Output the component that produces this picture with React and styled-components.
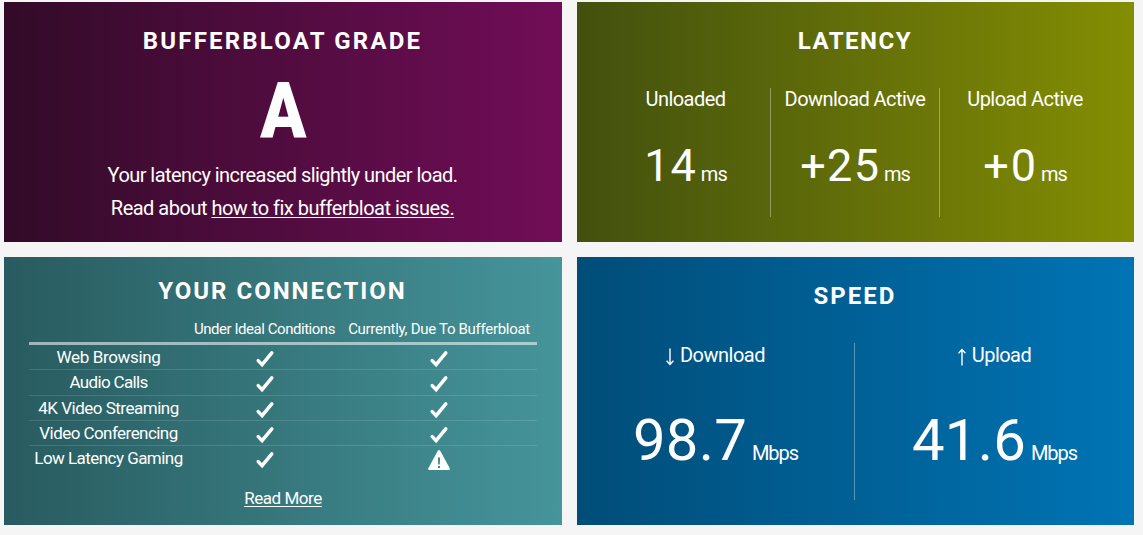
import React from "react";
import styled, { createGlobalStyle } from "styled-components";

const GlobalStyle = createGlobalStyle`
  * {
    box-sizing: border-box;
  }
  body {
    margin: 0;
    background: #f5f5f5;
    font-family: Roboto, "Liberation Sans", sans-serif;
    color: #ffffff;
  }
`;

const ResultsGrid = styled.main`
  display: grid;
  grid-template-columns: 558px 557px;
  grid-template-rows: 240px 268px;
  gap: 15px;
  padding: 2px 9px 10px 4px;
`;

const Card = styled.section`
  display: flex;
  flex-direction: column;
  align-items: center;
  padding-top: ${(props) => props.$top || 21}px;
  background: linear-gradient(to right, ${(props) => props.$from}, ${(props) => props.$to});
`;

const CardTitle = styled.h2`
  margin: 0 1px 0 0;
  font-weight: 700;
  font-size: 24px;
  line-height: 36px;
  letter-spacing: ${(props) => props.$track || 2}px;
  white-space: nowrap;
  text-transform: uppercase;
`;

const Grade = styled.div`
  margin: 12px 0 8px;
  font-weight: 900;
  font-size: 77px;
  line-height: 80px;
  transform: scaleX(0.88);
`;

const GradeText = styled.p`
  margin: 0 1px 0 0;
  font-size: 20px;
  line-height: 33px;
  letter-spacing: ${(props) => props.$track || -0.5}px;
  white-space: nowrap;
`;

const TextLink = styled.a`
  color: inherit;
  text-decoration: underline;
  text-decoration-thickness: 1px;
  text-underline-offset: 2px;
  text-decoration-skip-ink: none;
`;

const Columns = styled.div`
  display: grid;
  grid-template-columns: ${(props) => props.$columns};
  height: ${(props) => props.$height}px;
  margin-top: 29px;
`;

const Column = styled.div`
  display: flex;
  flex-direction: column;
  align-items: center;
  padding-top: ${(props) => props.$top || 0}px;

  & + & {
    border-left: 1px solid rgba(255, 255, 255, 0.35);
  }
`;

const Label = styled.div`
  display: flex;
  align-items: center;
  gap: 6px;
  font-size: 20px;
  line-height: 22px;
  letter-spacing: ${(props) => props.$track || -0.55}px;
  white-space: nowrap;
`;

const Reading = styled.div`
  display: flex;
  align-items: baseline;
  gap: 5px;
  margin-top: ${(props) => (props.$large ? 39 : 28)}px;
  line-height: ${(props) => (props.$large ? 70 : 56)}px;
`;

const Value = styled.span`
  margin-right: -${(props) => props.$track}px;
  font-size: ${(props) => (props.$large ? 58 : 45)}px;
  letter-spacing: ${(props) => props.$track}px;
`;

const Unit = styled.span`
  font-size: 20px;
  letter-spacing: -1px;
`;

const ConnectionTable = styled.div`
  width: 508px;
  margin-top: 10px;
`;

const TableRow = styled.div`
  display: grid;
  grid-template-columns: 159px 153px 196px;
  justify-items: center;
  height: ${(props) => props.$height || 25}px;
  font-size: 17px;
  line-height: 24px;
  white-space: nowrap;
  border-bottom: 1px solid rgba(255, 255, 255, 0.13);

  &:last-child {
    border-bottom: none;
  }
`;

const TableHead = styled(TableRow)`
  height: 26px;
  font-size: 15px;
  line-height: 20px;
  border-bottom: 3px solid rgba(255, 255, 255, 0.55);
`;

const Cell = styled.span`
  letter-spacing: ${(props) => props.$track || 0}px;
`;

const StatusIcon = styled.svg`
  display: block;
  width: 22px;
  height: 24px;
`;

const ReadMore = styled(TextLink)`
  margin-top: 15px;
  font-size: 17px;
  line-height: 24px;
  letter-spacing: -0.45px;
`;

const Arrow = styled.svg`
  display: block;
  width: 8px;
  height: 18px;
  margin-top: 4px;
`;

const rows = [
  { name: "Web Browsing", track: -0.35, ok: true },
  { name: "Audio Calls", track: -0.65, height: 26, ok: true },
  { name: "4K Video Streaming", track: -0.5, ok: true },
  { name: "Video Conferencing", track: -0.55, ok: true },
  { name: "Low Latency Gaming", track: -0.55, ok: false },
];

function Check() {
  return (
    <StatusIcon viewBox="0 0 22 24" fill="none">
      <path
        d="M4.2 15.6 L8.1 19.7 L17.8 7.8"
        stroke="#fff"
        strokeWidth="3.5"
        strokeLinecap="round"
      />
    </StatusIcon>
  );
}

function Warning() {
  return (
    <StatusIcon viewBox="0 0 22 24">
      <path
        fill="#fff"
        fillRule="evenodd"
        d="M9.8 4.7 Q11 3.3 12.2 4.7 L21.7 22.3 Q22.2 24 20.8 24 H1.2 Q-.2 24 .3 22.3 Z M9.9 11.4 L10.2 18.4 H11.8 L12.1 11.4 Z M10 20 V22 H12 V20 Z"
      />
    </StatusIcon>
  );
}

function DirectionArrow({ up }) {
  return (
    <Arrow viewBox="0 0 8 18" fill="none" stroke="#fff" strokeWidth="1.4">
      <path d={up ? "M4 17.5 V2 M.6 5.2 L4 1.5 L7.4 5.2" : "M4 .5 V16 M.6 12.8 L4 16.5 L7.4 12.8"} />
    </Arrow>
  );
}

export default function App() {
  return (
    <>
      <GlobalStyle />
      <ResultsGrid>
        <Card $from="#320b28" $to="#710d57">
          <CardTitle $track={2.2}>Bufferbloat Grade</CardTitle>
          <Grade>A</Grade>
          <GradeText $track={-0.55}>Your latency increased slightly under load.</GradeText>
          <GradeText>
            Read about <TextLink>how to fix bufferbloat issues.</TextLink>
          </GradeText>
        </Card>

        <Card $from="#42500e" $to="#848e03">
          <CardTitle $track={1.5}>Latency</CardTitle>
          <Columns $columns="169px 169px 171px" $height={129}>
            <Column>
              <Label>Unloaded</Label>
              <Reading>
                <Value $track={1}>14</Value>
                <Unit>ms</Unit>
              </Reading>
            </Column>
            <Column>
              <Label>Download Active</Label>
              <Reading>
                <Value $track={1.3}>+25</Value>
                <Unit>ms</Unit>
              </Reading>
            </Column>
            <Column>
              <Label>Upload Active</Label>
              <Reading>
                <Value $track={2}>+0</Value>
                <Unit>ms</Unit>
              </Reading>
            </Column>
          </Columns>
        </Card>

        <Card $from="#285b5f" $to="#45959b" $top={16}>
          <CardTitle>Your Connection</CardTitle>
          <ConnectionTable>
            <TableHead>
              <Cell />
              <Cell $track={-0.46}>Under Ideal Conditions</Cell>
              <Cell $track={-0.3}>Currently, Due To Bufferbloat</Cell>
            </TableHead>
            {rows.map((row) => (
              <TableRow key={row.name} $height={row.height}>
                <Cell $track={row.track}>{row.name}</Cell>
                <Check />
                {row.ok ? <Check /> : <Warning />}
              </TableRow>
            ))}
          </ConnectionTable>
          <ReadMore>Read More</ReadMore>
        </Card>

        <Card $from="#004d78" $to="#0074b5">
          <CardTitle>Speed</CardTitle>
          <Columns $columns="277px 280px" $height={157}>
            <Column $top={1}>
              <Label $track={-0.5}>
                <DirectionArrow />
                Download
              </Label>
              <Reading $large>
                <Value $large $track={0.3}>98.7</Value>
                <Unit>Mbps</Unit>
              </Reading>
            </Column>
            <Column $top={1}>
              <Label>
                <DirectionArrow up />
                Upload
              </Label>
              <Reading $large>
                <Value $large $track={0.3}>41.6</Value>
                <Unit>Mbps</Unit>
              </Reading>
            </Column>
          </Columns>
        </Card>
      </ResultsGrid>
    </>
  );
}
